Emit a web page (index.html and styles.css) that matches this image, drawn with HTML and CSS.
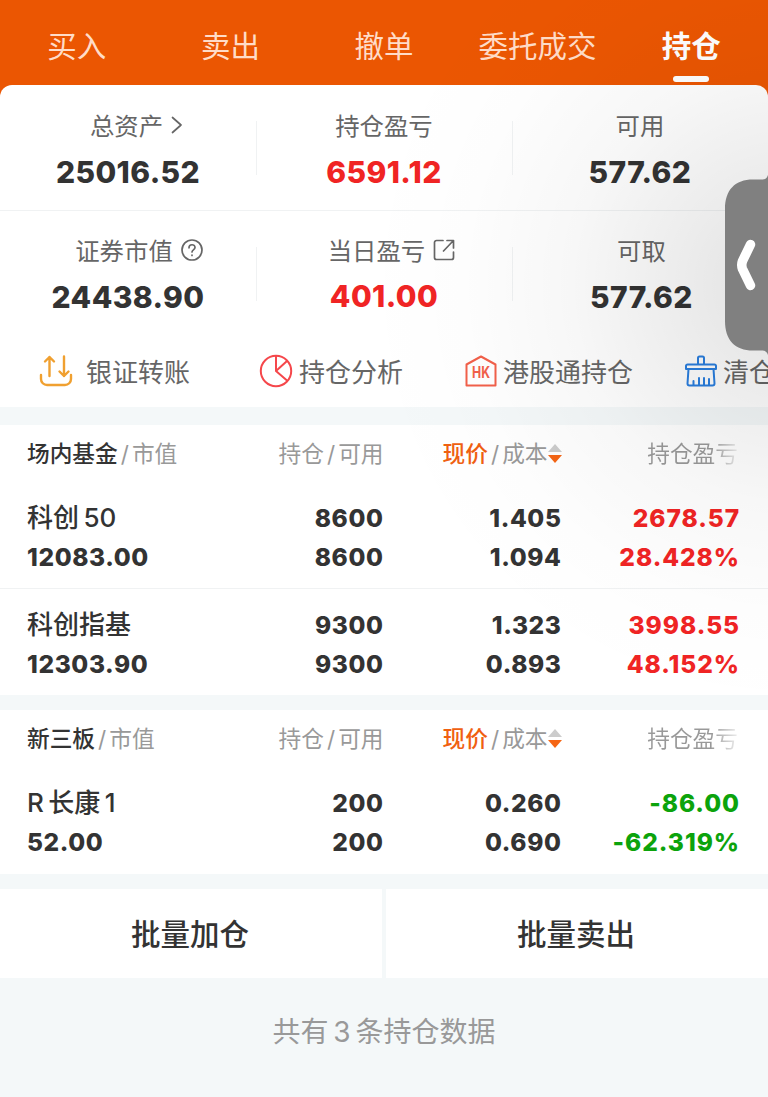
FILE: index.html
```html
<!DOCTYPE html>
<html lang="zh-CN">

<head>
  <meta charset="utf-8">
  <title>持仓</title>
  <link rel="stylesheet" href="styles.css">
</head>

<body>

  <div class="tabs">
    <a class="tab">买入</a>
    <a class="tab">卖出</a>
    <a class="tab">撤单</a>
    <a class="tab">委托成交</a>
    <a class="tab active">持仓</a>
  </div>

  <div class="card">
    <div class="summary">
      <div class="cell">
        <div class="label link">总资产
          <svg width="12" height="18" viewBox="0 0 12 18"><path d="M1.500 1.500L10 9l-8.500 7.500" /></svg>
        </div>
        <div class="value">25016.52</div>
      </div>
      <div class="cell">
        <div class="label">持仓盈亏</div>
        <div class="value red">6591.12</div>
      </div>
      <div class="cell">
        <div class="label">可用</div>
        <div class="value">577.62</div>
      </div>
    </div>
    <div class="summary second">
      <div class="cell">
        <div class="label help">证券市值
          <svg width="22" height="22" viewBox="0 0 22 22"><circle cx="11" cy="11" r="10" /><path d="M8 8.800c0-4 6-4 6-.4 0 2.400-3 2.400-3 4.600M11 16v.4" /></svg>
        </div>
        <div class="value">24438.90</div>
      </div>
      <div class="cell">
        <div class="label open">当日盈亏
          <svg width="22" height="22" viewBox="0 0 22 22"><path d="M10 1.500H3.500a2 2 0 0 0-2 2v15a2 2 0 0 0 2 2h15a2 2 0 0 0 2-2V13M14 1.500h6.500V9M20 2L10.500 12" /></svg>
        </div>
        <div class="value red up">401.00</div>
      </div>
      <div class="cell last">
        <div class="label">可取</div>
        <div class="value">577.62</div>
      </div>
    </div>
    <div class="actions">
      <a class="action transfer">
        <svg width="34" height="32" viewBox="0 0 34 32"><path d="M2 20v4a6 6 0 0 0 6 6h18a6 6 0 0 0 6-6v-4M10.500 21V2M6 6.500L10.500 2 15 6.500M25 1.500V21M20.500 16.500L25 21l4.500-4.500" /></svg>
        <span>银证转账</span>
      </a>
      <a class="action analysis">
        <svg width="34" height="34" viewBox="0 0 34 34"><circle cx="17" cy="17" r="15.200" /><path d="M17 2v15l11 9.500M17 17L28 7" /></svg>
        <span>持仓分析</span>
      </a>
      <a class="action hk">
        <svg width="32" height="32" viewBox="0 0 32 32"><path d="M1.500 9.500L16 1.500l14.500 8v21h-29z" /><text x="16" y="23" text-anchor="middle" textLength="18" lengthAdjust="spacingAndGlyphs">HK</text></svg>
        <span>港股通持仓</span>
      </a>
      <a class="action clear">
        <svg width="32" height="32" viewBox="0 0 32 32"><path d="M13 9.500V3a1.500 1.500 0 0 1 1.500-1.500h3A1.500 1.500 0 0 1 19 3v6.500M2.500 9.500h27a1.500 1.500 0 0 1 1.500 1.500v3H1v-3a1.500 1.500 0 0 1 1.500-1.500zM3.500 14L2.500 28.500a2 2 0 0 0 2 2h23a2 2 0 0 0 2-2L28.500 14M8.500 30v-4M14 30v-7M19 30v-7M24 30v-6" /></svg>
        <span>清仓</span>
      </a>
    </div>
  </div>

  <div class="list">
    <div class="row head">
      <div><b>场内基金</b><i>/</i>市值</div>
      <div>持仓<i>/</i>可用</div>
      <div><em>现价</em><i>/</i>成本<svg class="sort" width="14" height="20" viewBox="0 0 14 20"><path class="asc" d="M0 8l7-8 7 8z" /><path class="desc" d="M0 11h14l-7 8z" /></svg></div>
      <div><span class="fade">持仓盈亏</span></div>
    </div>
    <div class="row">
      <div><span class="name">科创 50</span><br>12083.00</div>
      <div>8600<br>8600</div>
      <div>1.405<br>1.094</div>
      <div class="red">2678.57<br>28.428%</div>
    </div>
    <div class="row">
      <div><span class="name">科创指基</span><br>12303.90</div>
      <div>9300<br>9300</div>
      <div>1.323<br>0.893</div>
      <div class="red">3998.55<br>48.152%</div>
    </div>
  </div>

  <div class="list">
    <div class="row head">
      <div><b>新三板</b><i>/</i>市值</div>
      <div>持仓<i>/</i>可用</div>
      <div><em>现价</em><i>/</i>成本<svg class="sort" width="14" height="20" viewBox="0 0 14 20"><path class="asc" d="M0 8l7-8 7 8z" /><path class="desc" d="M0 11h14l-7 8z" /></svg></div>
      <div><span class="fade">持仓盈亏</span></div>
    </div>
    <div class="row">
      <div><span class="name">R 长康 1</span><br>52.00</div>
      <div>200<br>200</div>
      <div>0.260<br>0.690</div>
      <div class="green">-86.00<br>-62.319%</div>
    </div>
  </div>

  <div class="buttons">
    <a>批量加仓</a>
    <a>批量卖出</a>
  </div>

  <div class="total">共有 3 条持仓数据</div>

  <div class="shade"></div>
  <svg class="handle" width="43" height="180" viewBox="0 0 43 180">
    <path class="tag" d="M43 0c-1 3-2.500 4.500-6 4.500h-9C10 4.500 0 15 0 34v112c0 19 10 29.500 28 29.500h9c3.500 0 5 1.500 6 4.500z" />
    <path class="back" d="M25.500 69.500L17.500 86q-1.500 4 0 8l8 16.500" />
  </svg>

</body>

</html>
```
FILE: styles.css
```css
* {
  box-sizing: border-box;
}

body {
  margin: 0;
  position: relative;
  height: 1097px;
  overflow: hidden;
  background: #f4f8f9;
  color: #333;
  font-family: Inter, "Noto Sans CJK SC", sans-serif;
}

svg {
  fill: none;
  stroke: currentColor;
  stroke-width: 2;
  stroke-linecap: round;
  stroke-linejoin: round;
  flex: none;
}

/* top tabs */
.tabs {
  display: flex;
  height: 97px;
  background: #eb5602;
}

.tab {
  width: 20%;
  height: 85px;
  line-height: 92px;
  text-align: center;
  white-space: nowrap;
  font-size: 29.5px;
  color: #ffdcc8;
}

.tab.active {
  display: flex;
  flex-direction: column;
  align-items: center;
  color: #fff;
  font-weight: bold;
}

.active::after {
  content: "";
  width: 36px;
  height: 6px;
  margin-top: -16px;
  border-radius: 3px;
  background: #fff;
}

/* assets */
.card {
  height: 322px;
  margin-top: -12px;
  border-radius: 12px 12px 0 0;
  background: #fff;
  overflow: hidden;
}

.summary {
  display: flex;
  height: 126px;
  padding-top: 22px;
  border-bottom: 1px solid #f0f2f3;
}

.second {
  height: 122px;
  border: 0;
}

.cell {
  width: 33.333%;
  text-align: center;
}

.cell.last {
  padding-left: 3px;
}

.cell + .cell {
  background: linear-gradient(#f0f2f3, #f0f2f3) 0 14px / 1px 54px no-repeat;
}

.label {
  display: flex;
  justify-content: center;
  align-items: center;
  gap: 8px;
  height: 34px;
  font-size: 24.4px;
  color: #666;
}

.second .label {
  height: 32px;
}

.label svg {
  margin-top: 1px;
  stroke-width: 1.7;
}

.link {
  padding-left: 17px;
}

.help {
  padding-left: 22px;
}

.open {
  padding-left: 15px;
}

.value {
  margin-top: 14px;
  height: 34px;
  line-height: 34px;
  font-size: 30px;
  font-weight: 800;
  letter-spacing: .4px;
}

.second .value {
  margin-top: 15px;
}

.second .up {
  margin-top: 14px;
}

.red {
  color: #f02424;
}

.green {
  color: #0ca30c;
}

.actions {
  display: flex;
  height: 74px;
  padding-left: 39px;
  align-items: center;
  white-space: nowrap;
  font-size: 26px;
}

.action {
  display: flex;
  align-items: center;
  flex: none;
}

.action svg {
  margin-top: 1px;
}

.action span {
  color: #666;
}

.transfer {
  width: 220px;
  gap: 13px;
  color: #f0a030;
}

.transfer svg {
  stroke-width: 2.4;
}

.analysis {
  width: 206px;
  gap: 6px;
  color: #f5474b;
}

.hk {
  width: 220px;
  gap: 6px;
  color: #f2604a;
}

.hk text {
  fill: currentColor;
  stroke: none;
  font-size: 16px;
  font-weight: bold;
}

.clear {
  gap: 6px;
  color: #2a7fe0;
}

/* positions */
.list {
  margin-top: 15px;
  background: #fff;
}

.card + .list {
  margin-top: 18px;
}

.row {
  display: grid;
  grid-template-columns: 178px 178.500px 178px 178.500px;
  height: 107px;
  padding: 17px 0 0 27px;
  line-height: 38.500px;
  font-size: 24.5px;
  font-weight: 800;
  letter-spacing: .6px;
  white-space: nowrap;
}

.row + .row + .row {
  margin-top: -1px;
  border-top: 1px solid #f0f2f3;
}

.row div + div {
  text-align: right;
}

.row .red,
.row .green {
  letter-spacing: .95px;
}

.name {
  font-size: 26px;
  font-weight: 500;
  letter-spacing: 0;
  word-spacing: -2.500px;
}

.row.head {
  height: 57px;
  padding-top: 10px;
  font-size: 22.700px;
  font-weight: normal;
  letter-spacing: 0;
  color: #999;
}

.head b {
  font-weight: 500;
  color: #333;
}

.head i {
  margin: 0 3px;
  font-style: normal;
}

.head em {
  font-style: normal;
  font-weight: 500;
  color: #f06010;
}

.sort {
  stroke: none;
  vertical-align: -2px;
}

.asc {
  fill: #ccc;
}

.desc {
  fill: #f56514;
}

.fade {
  margin-right: 2px;
  background: linear-gradient(to right, #999 70%, #eee) text;
  color: transparent;
}

/* bottom */
.buttons {
  display: flex;
  gap: 4px;
  margin-top: 15px;
}

.buttons a {
  flex: 1;
  height: 89px;
  line-height: 91px;
  padding-right: 2px;
  background: #fff;
  text-align: center;
  font-size: 29.500px;
  font-weight: 500;
}

.total {
  margin-top: 34px;
  line-height: 40px;
  text-align: center;
  font-size: 28px;
  word-spacing: -3px;
  color: #999;
}

/* side drawer handle */
.shade {
  position: absolute;
  inset: 0;
  background: radial-gradient(circle at 790px 285px, rgba(0, 0, 0, .12), rgba(0, 0, 0, .075) 110px, rgba(0, 0, 0, .03) 220px, rgba(0, 0, 0, .008) 330px, transparent 430px);
}

.handle {
  position: absolute;
  top: 175px;
  right: 0;
}

.tag {
  fill: #808080;
  stroke: none;
}

.back {
  stroke: #fff;
  stroke-width: 9.500;
}
```
